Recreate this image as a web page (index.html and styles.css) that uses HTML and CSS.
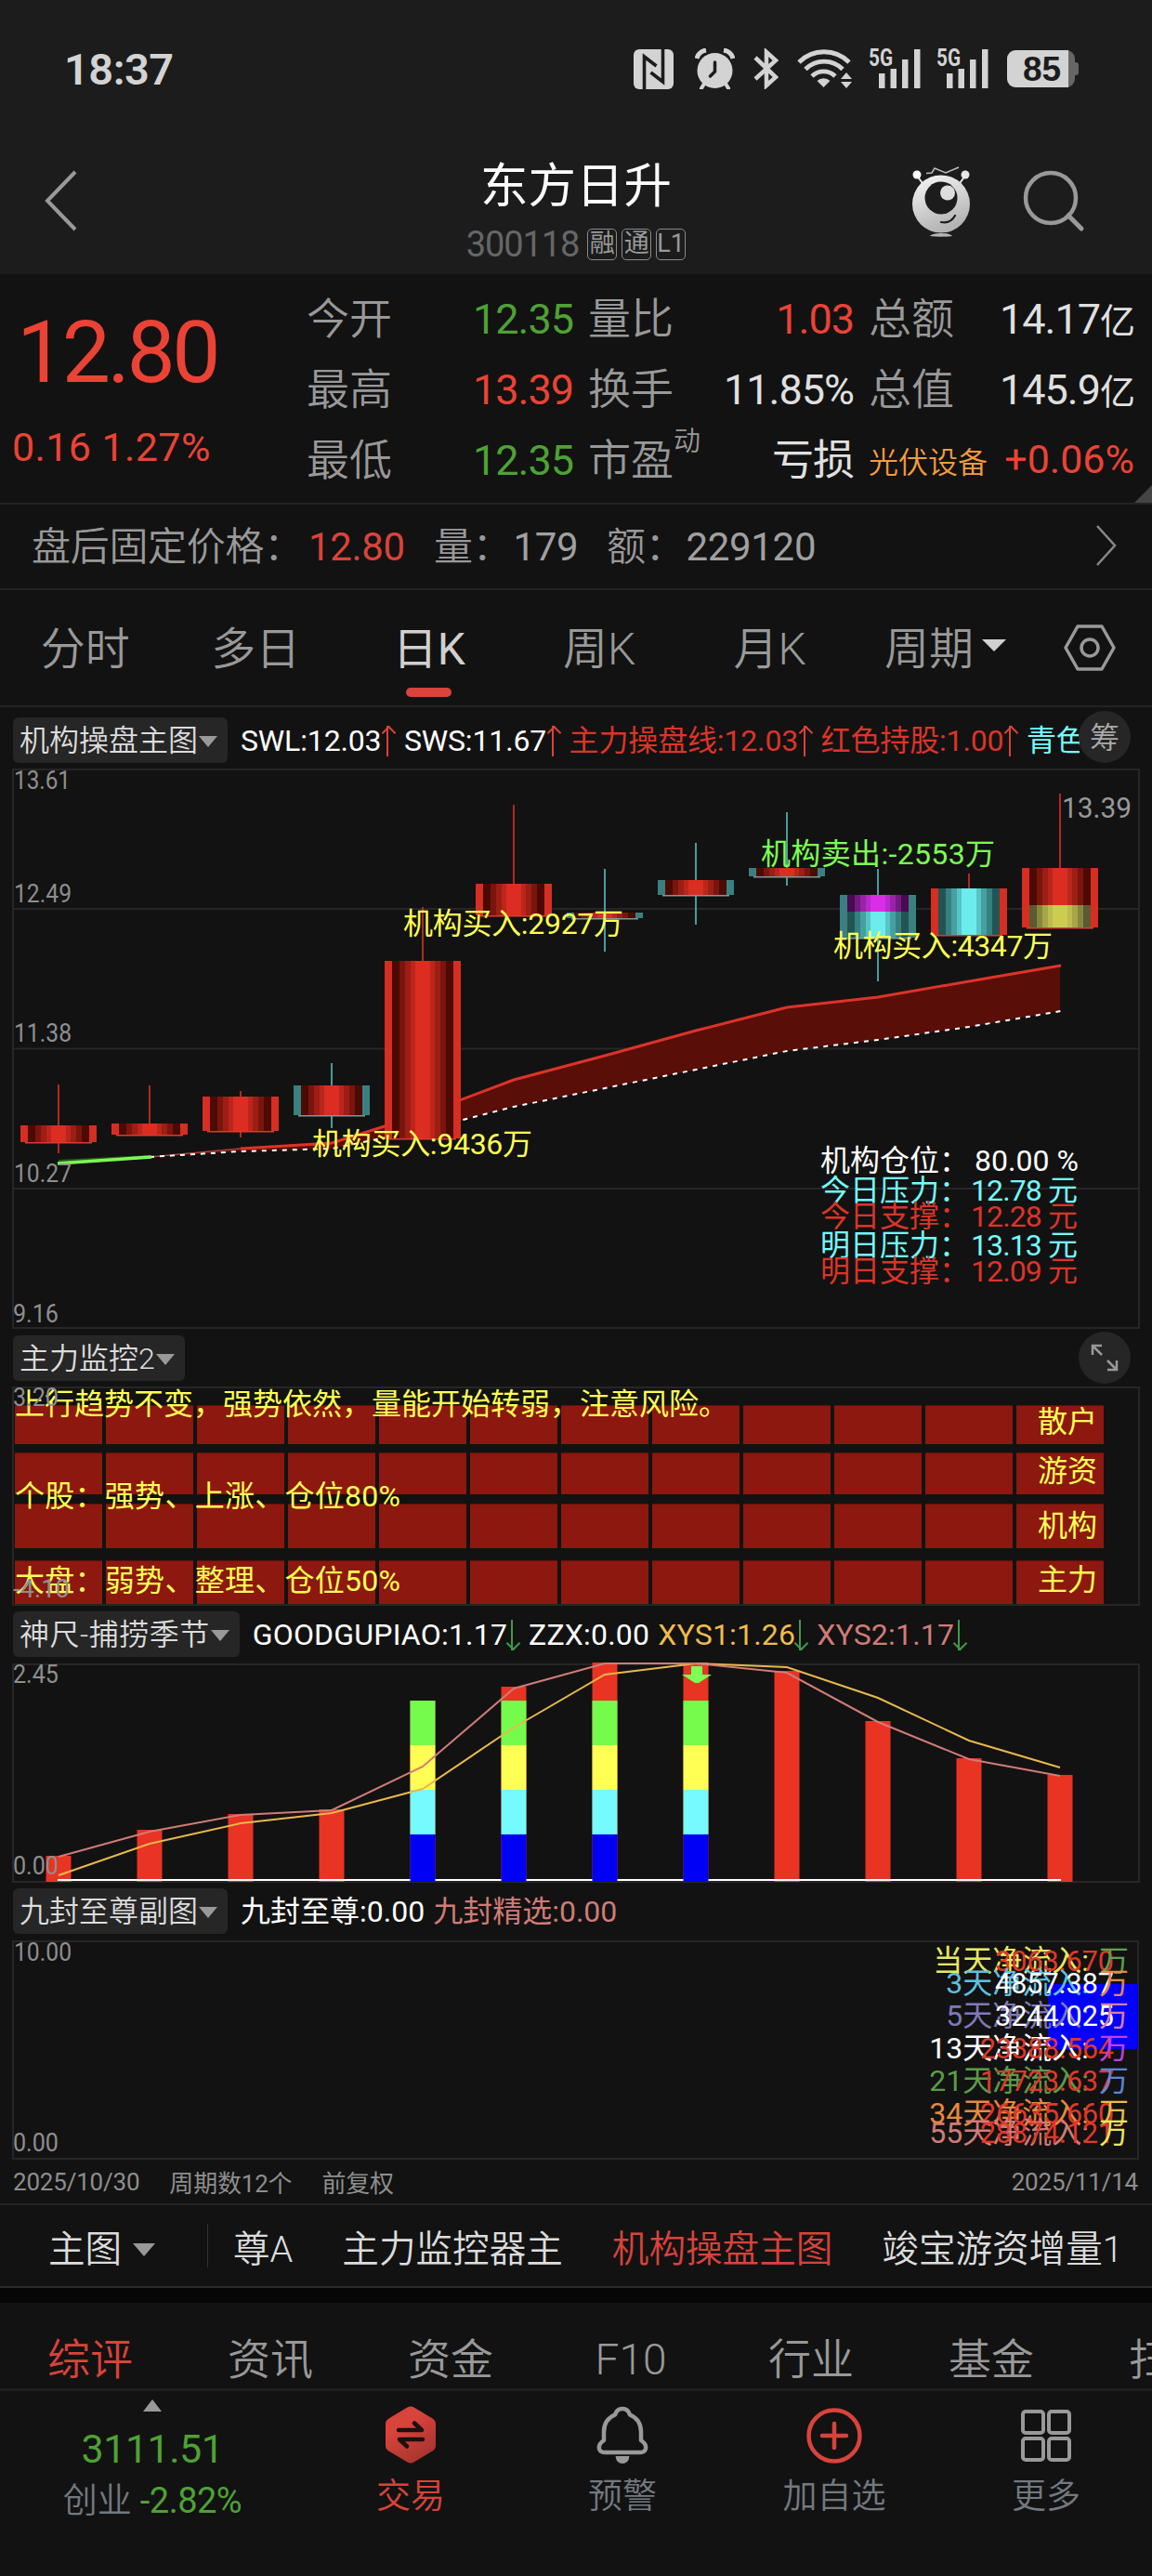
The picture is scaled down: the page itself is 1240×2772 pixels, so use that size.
FILE: index.html
```html
<!DOCTYPE html>
<html lang="zh-CN">
<head>
  <meta charset="UTF-8" />
  <meta name="viewport" content="width=device-width, initial-scale=1.0"/>
  <title>东方日升 300118</title>
  <link rel="stylesheet" href="styles.css">
</head>
<body>
  <header class="top">
    <div class="status">
      <span class="clock">18:37</span>
      <div class="status-icons">
        <svg class="i-nfc" width="43" height="43" viewBox="0 0 43 43">
          <rect width="43" height="43" rx="6" fill="#d3d3d3"/>
          <path d="M11.500 43V8l13 10M31.500 0V35l-13-10" fill="none" stroke="#1c1c1c" stroke-width="3.600"/>
        </svg>
        <svg class="i-alarm" width="43" height="44" viewBox="0 0 43 44">
          <circle cx="21.500" cy="24" r="19" fill="#d3d3d3"/>
          <path d="M2 11A12 12 0 0 1 12 2M41 11A12 12 0 0 0 31 2" stroke="#d3d3d3" stroke-width="5" fill="none"/>
          <path d="M10 38l-3 5M33 38l3 5" stroke="#d3d3d3" stroke-width="4" stroke-linecap="round"/>
          <path d="M21.500 15v10l-5 5" stroke="#1c1c1c" stroke-width="3.500" fill="none" stroke-linecap="round"/>
        </svg>
        <svg class="i-bt" width="27" height="44" viewBox="0 0 27 44">
          <path d="M2 10L24 31 14 40V4L24 13 2 33" fill="none" stroke="#d3d3d3" stroke-width="4.500"/>
        </svg>
        <svg class="i-wifi" width="59" height="43" viewBox="0 0 59 43">
          <g fill="none" stroke="#d3d3d3" stroke-width="4.800">
            <path d="M2 14A38 38 0 0 1 56 14"/>
            <path d="M9 21.500A28 28 0 0 1 49 21.500"/>
            <path d="M16 29A18 18 0 0 1 41 29"/>
          </g>
          <path d="M28.500 41l-7-7a10 10 0 0 1 14 0z" fill="#d3d3d3"/>
          <path d="M47 32l6-7 6 7zM47 35l6 7 6-7z" fill="#d3d3d3"/>
        </svg>
        <svg class="i-sig" width="56" height="44" viewBox="0 0 56 44">
          <text x="0" y="19" class="sig-text" textLength="26" lengthAdjust="spacingAndGlyphs">5G</text>
          <path d="M11 27h6.500v16H11zM23.500 22H30v21h-6.500zM36 12h6.500v31H36zM49 1h6.500v42H49z" fill="#d3d3d3"/>
        </svg>
        <svg class="i-sig" width="56" height="44" viewBox="0 0 56 44">
          <text x="0" y="19" class="sig-text" textLength="26" lengthAdjust="spacingAndGlyphs">5G</text>
          <path d="M11 27h6.500v16H11zM23.500 22H30v21h-6.500zM36 12h6.500v31H36zM49 1h6.500v42H49z" fill="#d3d3d3"/>
        </svg>
        <svg class="i-bat" width="77" height="40" viewBox="0 0 77 40">
          <path d="M60 0h4a9 9 0 0 1 9 9v4h1q3 0 3 3v8q0 3-3 3h-1v4a9 9 0 0 1-9 9h-4z" fill="#666"/>
          <path d="M9 0h57v40H9a9 9 0 0 1-9-9V9a9 9 0 0 1 9-9z" fill="#d3d3d3"/>
          <text x="37.500" y="32.500" text-anchor="middle" class="bat-text">85</text>
        </svg>
      </div>
    </div>
    <div class="navbar">
      <div class="nav-left">
        <svg width="40" height="66" viewBox="0 0 40 66"><path d="M35 2L5 33l30 31" fill="none" stroke="#999" stroke-width="4"/></svg>
      </div>
      <div class="nav-title">
        <h1>东方日升</h1>
        <div class="code"><span class="num">300118</span><i>融</i><i>通</i><i>L1</i></div>
      </div>
      <div class="nav-right">
        <svg width="64" height="80" viewBox="0 0 64 80">
          <defs>
            <linearGradient id="robot" x1="0" y1="0" x2="0.400" y2="1">
              <stop offset="0" stop-color="#f8f8f8"/><stop offset="1" stop-color="#b4b4b4"/>
            </linearGradient>
          </defs>
          <path d="M5 10l8 11M57 10l-8 11" stroke="#e8e8e8" stroke-width="2"/>
          <circle cx="5" cy="9" r="4.500" fill="#fff"/><circle cx="57" cy="9" r="4.500" fill="#e8e8e8"/>
          <path d="M15 7.500l6-.5 3-5 12 5 14-6" fill="none" stroke="#bbb" stroke-width="1.500"/>
          <circle cx="31" cy="40.500" r="31" fill="url(#robot)"/>
          <circle cx="31" cy="34" r="17.500" fill="#1c1c1c"/>
          <circle cx="38" cy="28.500" r="8" fill="#ddd"/>
          <path d="M31 60q10 2 15-7" fill="none" stroke="#1c1c1c" stroke-width="2.200" stroke-linecap="round"/>
          <path d="M19 75a12 3 0 0 1 24 0a24 5 0 0 1-24 0z" fill="#b4b4b4"/>
        </svg>
        <svg width="68" height="68" viewBox="0 0 68 68">
          <circle cx="31" cy="31" r="27" fill="none" stroke="#999" stroke-width="4.500"/>
          <path d="M50 50l14 14" stroke="#999" stroke-width="5" stroke-linecap="round"/>
        </svg>
      </div>
    </div>
  </header>

  <section class="quote">
    <div class="price">
      <div class="last num">12.80</div>
      <div class="change num">0.16 1.27%</div>
    </div>
    <div class="grid">
      <div><label>今开</label><b class="down">12.35</b></div>
      <div><label>量比</label><b class="up">1.03</b></div>
      <div><label>总额</label><b>14.17<small>亿</small></b></div>
      <div><label>最高</label><b class="up">13.39</b></div>
      <div><label>换手</label><b>11.85%</b></div>
      <div><label>总值</label><b>145.9<small>亿</small></b></div>
      <div><label>最低</label><b class="down">12.35</b></div>
      <div><label>市盈<sup>动</sup></label><b>亏损</b></div>
      <div class="sector"><label>光伏设备</label><b class="up">+0.06%</b></div>
    </div>
    <span class="corner"></span>
  </section>

  <section class="after">
    <span class="a-price">盘后固定价格：<b class="up">12.80</b></span>
    <span class="a-vol">量：<b>179</b></span>
    <span class="a-amt">额：<b>229120</b></span>
    <svg width="24" height="46" viewBox="0 0 24 46"><path d="M2 2l19 21L2 44" fill="none" stroke="#888" stroke-width="2.500"/></svg>
  </section>

  <nav class="periods">
    <span>分时</span>
    <span>多日</span>
    <span class="k active">日K</span>
    <span class="k">周K</span>
    <span class="k">月K</span>
    <span class="more">周期<i class="tri"></i></span>
    <svg width="56" height="50" viewBox="0 0 56 50">
      <path d="M15 2h26l13 23-13 23H15L2 25z" fill="none" stroke="#999" stroke-width="3.500" stroke-linejoin="round"/>
      <circle cx="28" cy="25" r="9" fill="none" stroke="#999" stroke-width="3.500"/>
    </svg>
  </nav>

  <div class="legend first">
    <span class="tag">机构操盘主图<i class="tri"></i></span>
    <div class="values">
      <span class="w">SWL:12.03</span><i class="arr up-arr"></i>
      <span class="w">SWS:11.67</span><i class="arr up-arr"></i>
      <span class="r">主力操盘线:12.03</span><i class="arr up-arr"></i>
      <span class="r">红色持股:1.00</span><i class="arr up-arr"></i>
      <span class="c">青色</span>
    </div>
    <span class="round">筹</span>
  </div>
  <svg class="chart" id="main" width="1240" height="603" viewBox="0 827 1240 603">
    <path class="grid-line" d="M14 978H1226M14 1128.500H1226M14 1279H1226"/>
    <rect class="frame" x="14" y="828" width="1212" height="601"/>
    <polygon points="63,1248 161,1243 161,1246 63,1252" fill="#2f5a1e"/>
    <polygon fill="#5a0e08" points="161,1245 259,1236 357,1230 455,1199 553,1162 651,1136 749,1109 847,1084 945,1073 1043,1056 1141,1039 1141,1088 1043,1105 945,1119 847,1131 749,1151 651,1171 553,1191 455,1216 357,1236 259,1239"/>
    <polyline points="161,1245 259,1236" stroke="#a8443c" stroke-width="1.500"/>
    <polyline points="259,1236 357,1230 455,1199 553,1162 651,1136 749,1109 847,1084 945,1073 1043,1056 1142,1039" fill="none" stroke="#dc3428" stroke-width="3"/>
    <polyline points="161,1245 259,1239 357,1236 455,1216 553,1191 651,1171 749,1151 847,1131 945,1119 1043,1105 1142,1088" fill="none" stroke="#fff" stroke-width="2" stroke-dasharray="5 6"/>
    <polyline points="62,1252 163,1245" stroke="#7dff55" stroke-width="3.500"/>
    <g id="candles"></g>
    <g class="axis">
      <text x="15" y="849" textLength="61" lengthAdjust="spacingAndGlyphs">13.61</text>
      <text x="15" y="971" textLength="62" lengthAdjust="spacingAndGlyphs">12.49</text>
      <text x="15" y="1121" textLength="62" lengthAdjust="spacingAndGlyphs">11.38</text>
      <text x="15" y="1272" textLength="62" lengthAdjust="spacingAndGlyphs">10.27</text>
      <text x="14" y="1423" textLength="49" lengthAdjust="spacingAndGlyphs">9.16</text>
      <text class="high" x="1143" y="880" textLength="75" lengthAdjust="spacingAndGlyphs">13.39</text>
    </g>
    <g class="note">
      <text x="434" y="1005" textLength="237">机构买入:2927万</text>
      <text x="336" y="1242" textLength="237">机构买入:9436万</text>
      <text x="897" y="1029" textLength="236">机构买入:4347万</text>
      <text x="819" y="930" textLength="252" fill="#7dff55">机构卖出:-2553万</text>
    </g>
    <g class="info">
      <g fill="#fff"><text x="883" y="1260">机构仓位：</text><text x="1049" y="1260" textLength="112">80.00 %</text></g>
      <g fill="#75fbfd"><text x="883" y="1292">今日压力：</text><text x="1045" y="1292" textLength="115">12.78 元</text></g>
      <g fill="#dc3428"><text x="883" y="1320">今日支撑：</text><text x="1045" y="1320" textLength="115">12.28 元</text></g>
      <g fill="#75fbfd"><text x="883" y="1351">明日压力：</text><text x="1045" y="1351" textLength="115">13.13 元</text></g>
      <g fill="#dc3428"><text x="883" y="1379">明日支撑：</text><text x="1045" y="1379" textLength="115">12.09 元</text></g>
    </g>
  </svg>

  <div class="legend second">
    <span class="tag">主力监控2<i class="tri"></i></span>
    <span class="round">
      <svg width="30" height="30" viewBox="0 0 30 30"><path d="M2 12V2h10M2 2l10 10M28 18v10H18M28 28L18 18" fill="none" stroke="#999" stroke-width="2.500"/></svg>
    </span>
  </div>
  <svg class="chart" width="1240" height="236" viewBox="0 1492 1240 236">
    <g id="cells"></g>
    <rect class="frame" x="14" y="1493" width="1212" height="234"/>
    <g class="note">
      <text x="16" y="1522">上行趋势不变，强势依然，量能开始转弱，注意风险。</text>
      <text x="16" y="1621" textLength="415">个股：强势、上涨、仓位80%</text>
      <text x="16" y="1712" textLength="415">大盘：弱势、整理、仓位50%</text>
      <text x="1117" y="1541">散户</text>
      <text x="1117" y="1594">游资</text>
      <text x="1117" y="1653">机构</text>
      <text x="1117" y="1711">主力</text>
    </g>
    <g class="axis">
      <text x="14" y="1513" textLength="49" lengthAdjust="spacingAndGlyphs">3.20</text>
      <text x="14" y="1719" textLength="61" lengthAdjust="spacingAndGlyphs">-4.10</text>
    </g>
  </svg>

  <div class="legend third">
    <span class="tag">神尺-捕捞季节<i class="tri"></i></span>
    <div class="values">
      <span class="w good">GOODGUPIAO:1.17</span><i class="arr down-arr"></i>
      <span class="w">ZZX:0.00</span>
      <span class="y">XYS1:1.26</span><i class="arr down-arr"></i>
      <span class="p">XYS2:1.17</span><i class="arr down-arr"></i>
    </div>
  </div>
  <svg class="chart" width="1240" height="236" viewBox="0 1790 1240 236">
    <rect class="frame" x="14" y="1791" width="1212" height="234"/>
    <g id="bars"></g>
    <polyline points="63,2018 161,1984 259,1962 357,1951 455,1925 553,1859 651,1802 749,1790 847,1794 945,1827 1043,1873 1141,1902" fill="none" stroke="#e8b84c" stroke-width="2"/>
    <polyline points="63,1998 161,1971 259,1953 357,1948 455,1901 553,1817 651,1790 749,1790 847,1800 945,1853 1043,1893 1141,1911" fill="none" stroke="#d07c76" stroke-width="2"/>
    <path d="M744 1793h12v9h10l-14 9h-4l-14-9h10z" fill="#7dff55"/>
    <g class="axis">
      <text x="14" y="1811" textLength="49" lengthAdjust="spacingAndGlyphs">2.45</text>
      <text x="14" y="2017" textLength="49" lengthAdjust="spacingAndGlyphs">0.00</text>
    </g>
  </svg>

  <div class="legend third fourth">
    <span class="tag">九封至尊副图<i class="tri"></i></span>
    <div class="values">
      <span class="w">九封至尊:0.00</span>
      <span class="p">九封精选:0.00</span>
    </div>
  </div>
  <svg class="chart" width="1240" height="236" viewBox="0 2088 1240 236">
    <rect class="frame" x="14" y="2089" width="1211" height="234"/>
    <rect x="1128" y="2135" width="97" height="70" fill="#00f"/>
    <g id="flows" class="flow"></g>
    <g class="axis">
      <text x="15" y="2110" textLength="62" lengthAdjust="spacingAndGlyphs">10.00</text>
      <text x="14" y="2315" textLength="49" lengthAdjust="spacingAndGlyphs">0.00</text>
    </g>
  </svg>

  <div class="dates">
    <span>2025/10/30</span>
    <span>周期数12个</span>
    <span>前复权</span>
    <span class="end">2025/11/14</span>
  </div>

  <div class="picker">
    <span class="pick-main">主图<i class="tri"></i></span>
    <span>尊A</span>
    <span>主力监控器主</span>
    <span class="active">机构操盘主图</span>
    <span>竣宝游资增量1</span>
  </div>

  <nav class="tabs">
    <span class="active">综评</span>
    <span>资讯</span>
    <span>资金</span>
    <span>F10</span>
    <span>行业</span>
    <span>基金</span>
    <span>扫雷</span>
  </nav>

  <footer class="bottom">
    <div class="index">
      <i class="tri-up"></i>
      <div class="idx-value num">3111.51</div>
      <div class="idx-change">创业 <b>-2.82%</b></div>
    </div>
    <div class="item red">
      <svg width="56" height="62" viewBox="0 0 56 62">
        <defs>
          <linearGradient id="trade" x1="0" y1="0" x2="0.600" y2="1">
            <stop offset="0.400" stop-color="#d8433b"/><stop offset="1" stop-color="#a8352f"/>
          </linearGradient>
        </defs>
        <path d="M24.500 1.500q3.500-2 7 0l20 12q3.500 2 3.500 6v23q0 4-3.500 6l-20 12q-3.500 2-7 0l-20-12Q1 46.500 1 42.500v-23q0-4 3.500-6z" fill="url(#trade)"/>
        <path d="M15 26h25l-8-7.500M41 36H16l8 7.500" fill="none" stroke="#1a1010" stroke-width="4.500" stroke-linecap="round" stroke-linejoin="round"/>
      </svg>
      <span>交易</span>
    </div>
    <div class="item">
      <svg width="56" height="62" viewBox="0 0 56 62">
        <path d="M28 3q6 0 8 6.500q12 5 12 18.500v9q6 4 5 9q-1 4-6 4H9q-5 0-6-4q-1-5 5-9v-9Q8 14.500 20 9.500Q22 3 28 3z" fill="none" stroke="#999" stroke-width="4.500" stroke-linejoin="round"/>
        <path d="M20.500 54h15q-1 8-7.500 8t-7.500-8z" fill="#999"/>
      </svg>
      <span>预警</span>
    </div>
    <div class="item">
      <svg width="60" height="62" viewBox="0 0 60 62">
        <circle cx="30" cy="32" r="27.500" fill="none" stroke="#d8433b" stroke-width="4.500"/>
        <path d="M30 19v26M17 32h26" stroke="#d8433b" stroke-width="4.500" stroke-linecap="round"/>
      </svg>
      <span>加自选</span>
    </div>
    <div class="item">
      <svg width="56" height="62" viewBox="0 0 56 62">
        <g fill="none" stroke="#999" stroke-width="4">
          <rect x="3" y="6" width="22" height="23" rx="3"/><rect x="31" y="6" width="22" height="23" rx="3"/>
          <rect x="3" y="35" width="22" height="23" rx="3"/><rect x="31" y="35" width="22" height="23" rx="3"/>
        </g>
      </svg>
      <span>更多</span>
    </div>
  </footer>

  <script src="script.js"></script>
</body>
</html>
```

FILE: styles.css
```css
* {
  box-sizing: border-box;
}

body {
  margin: 0;
  width: 1240px;
  height: 2772px;
  overflow: hidden;
  background: #121212;
  color: #999;
  font-family: Roboto, "Noto Sans CJK SC", sans-serif;
  font-weight: 350;
}

svg {
  display: block;
  flex-shrink: 0;
}

b, i {
  font-weight: 400;
  font-style: normal;
}

h1 {
  margin: 0;
  font-size: 51.5px;
  line-height: 60px;
  font-weight: 400;
  color: #fff;
}

.num {
  font-weight: 400;
  letter-spacing: -0.03em;
}

.up { color: #ea4335; }
.down { color: #4ea135; }

/* status bar + title */
.top {
  height: 295px;
  background: #1c1c1c;
}

.status {
  height: 148px;
  padding: 0 79px 0 69px;
  display: flex;
  justify-content: space-between;
  align-items: center;
}

.clock {
  font-size: 47px;
  font-weight: 600;
  letter-spacing: -0.5px;
  color: #d3d3d3;
}

.status-icons {
  display: flex;
  align-items: center;
}

.i-alarm { margin-left: 23px; }
.i-bt, .i-wifi, .i-bat { margin-left: 20px; }
.i-sig { margin-left: 17.5px; }

.sig-text {
  font-size: 25px;
  font-weight: 700;
  fill: #d3d3d3;
}

.bat-text {
  font-family: "Liberation Sans", sans-serif;
  font-size: 37px;
  font-weight: 700;
  fill: #1c1c1c;
}

.navbar {
  height: 147px;
  display: flex;
}

.nav-left {
  width: 300px;
  padding: 35px 0 0 46px;
}

.nav-title {
  flex: 1;
  padding-top: 23px;
  text-align: center;
}

.code {
  display: flex;
  justify-content: center;
  align-items: center;
  gap: 5px;
  margin-top: 12px;
  height: 40px;
  font-size: 38px;
  color: #666;
}

.code .num {
  margin-right: 4px;
}

.code i {
  width: 32px;
  height: 34px;
  border: 1.5px solid #8a8a8a;
  border-radius: 5px;
  font-size: 27px;
  line-height: 31px;
  color: #999;
}

.nav-right {
  width: 300px;
  padding: 31px 0 0 42px;
  display: flex;
  gap: 54px;
}

.nav-right svg + svg {
  margin-top: 3px;
}

/* quote header */
.quote {
  position: relative;
  height: 248px;
  display: flex;
  border-bottom: 2px solid #232323;
}

.price {
  width: 330px;
  color: #ea4335;
}

.last {
  padding: 30px 0 0 18px;
  font-size: 93px;
  line-height: 110px;
  letter-spacing: -3.5px;
}

.change {
  padding: 21px 0 0 13px;
  font-size: 43px;
  line-height: 50px;
  letter-spacing: 0.4px;
}

.grid {
  display: grid;
  grid-template-columns: 287px 286px 286px;
  grid-auto-rows: 76px;
  column-gap: 16px;
  padding-top: 10px;
}

.grid > div {
  display: flex;
  justify-content: space-between;
  align-items: baseline;
  line-height: 76px;
  white-space: nowrap;
}

.grid label {
  font-size: 46px;
}

.grid b {
  font-size: 45px;
  letter-spacing: -1px;
  color: #e0e0e0;
}

.grid small {
  font-size: 38px;
  line-height: 0;
}

.grid b.up { color: #ea4335; }
.grid b.down { color: #4ea135; }

.grid sup {
  font-size: 29px;
  line-height: 0;
  vertical-align: 26px;
}

.grid .sector { line-height: 74px; }

.grid .sector label {
  font-size: 32px;
  color: #f29b3e;
}

.grid .sector b {
  font-size: 43px;
  letter-spacing: 0;
}

.corner {
  position: absolute;
  right: 0;
  bottom: 0;
  border-left: 19px solid transparent;
  border-bottom: 19px solid #444;
}

/* after-hours fixed price */
.after {
  height: 92px;
  padding: 0 37px 7px 34px;
  display: flex;
  align-items: center;
  border-bottom: 2px solid #232323;
  font-size: 42px;
  letter-spacing: -0.3px;
}

.after b { color: #a0a0a0; }
.after b.up { color: #d9433a; }
.a-price { width: 433px; }
.a-price b { margin-left: 6px; }
.a-vol { width: 186px; }
.after .a-vol b, .after .a-amt b { margin-left: 2px; }
.after svg { margin: 5px 0 0 auto; }

/* period tabs */
.periods {
  height: 126px;
  padding-bottom: 6px;
  display: flex;
  align-items: center;
  border-bottom: 2px solid #232323;
  font-size: 48px;
}

.periods span {
  position: relative;
  width: 183.5px;
  text-align: center;
}

.periods .k { padding-left: 6px; }

.periods .active {
  color: #d0d0d0;
  font-weight: 400;
}

.periods .active::after {
  content: "";
  position: absolute;
  left: 70px;
  bottom: -21px;
  width: 49px;
  height: 10px;
  border-radius: 5px;
  background: #d9433a;
}

.periods .more {
  width: 200px;
  display: flex;
  justify-content: center;
  align-items: center;
}

.periods svg { margin: 5px 0 0 27px; }

.tri {
  display: inline-block;
  border: 10.5px solid transparent;
  border-top: 12px solid #999;
  border-bottom: 0;
}

.periods .tri {
  margin-left: 9px;
  border-width: 13px 13px 0;
  border-top-color: #d0d0d0;
}

/* indicator headers */
.legend {
  height: 62px;
  padding: 0 23px 0 14px;
  display: flex;
  align-items: flex-start;
  position: relative;
  font-size: 32px;
  line-height: 51px;
  white-space: nowrap;
}

.legend.first { height: 66px; padding-top: 11px; }
.legend.second { padding-top: 7px; }
.legend.third { padding-top: 6px; }

.tag {
  height: 49px;
  padding: 2px 11px 0 7px;
  display: flex;
  align-items: center;
  border-radius: 6px;
  background: #262626;
  color: #dcdcdc;
}

.tag .tri { margin-left: 1px; }
.third .tag { letter-spacing: 0.5px; }
.fourth .tag { letter-spacing: 0; }

.values {
  display: flex;
  align-items: center;
  margin-left: 14px;
}

.first .values {
  width: 903px;
  overflow: hidden;
  letter-spacing: -0.15px;
}

.third .values { letter-spacing: 0.2px; }
.fourth .values { letter-spacing: 0; }

.values span { font-weight: 400; }
.w { color: #fff; }
.r { color: #dc3428; }
.c { color: #75fbfd; }
.y { color: #f0bc4c; }
.p { color: #d07c76; }

.arr {
  flex-shrink: 0;
  position: relative;
  width: 2px;
  height: 33px;
  margin: 0 17px 0 6px;
  background: #d9433a;
}

.first .arr { margin-right: 16.5px; }
.third .arr { margin: 0 17px 0 4px; }

.arr::before {
  content: "";
  position: absolute;
  left: -3.5px;
  top: 2px;
  width: 9px;
  height: 9px;
  border: solid #d9433a;
  border-width: 2px 0 0 2px;
  transform: rotate(45deg);
}

.down-arr { background: #3f9a48; }

.down-arr::before {
  top: auto;
  bottom: 2px;
  border-color: #3f9a48;
  border-width: 0 2px 2px 0;
}

.values span + span { margin-left: 9px; }

.round {
  position: absolute;
  right: 23px;
  top: 4px;
  width: 56px;
  height: 56px;
  display: flex;
  justify-content: center;
  align-items: center;
  border-radius: 50%;
  background: #262626;
  color: #aaa;
}

.first .round { padding-top: 3px; }
.second .round { top: 3px; }

/* charts */
.chart { overflow: visible; }

.frame, .grid-line {
  fill: none;
  stroke: #262626;
  stroke-width: 2;
}

.axis text {
  font-size: 28px;
  font-weight: 400;
  fill: #8e8e8e;
}

.axis .high {
  font-size: 32px;
  fill: #999;
}

.note, .info, .flow {
  font-size: 32px;
  font-weight: 400;
}

.note { fill: #ffff54; }

.dates {
  height: 49px;
  padding: 0 15px 0 14px;
  display: flex;
  align-items: center;
  gap: 32px;
  border-bottom: 2px solid #232323;
  font-size: 26px;
  font-weight: 400;
  letter-spacing: -0.2px;
  color: #8e8e8e;
}

.dates .end { margin-left: auto; }

/* main chart picker */
.picker {
  height: 89px;
  display: flex;
  align-items: center;
  border-bottom: 2px solid #2a2a2a;
  font-size: 39.6px;
  color: #dcdcdc;
  white-space: nowrap;
  overflow: hidden;
}

.picker span {
  flex-shrink: 0;
  margin-right: 53px;
}

.picker .pick-main {
  width: 224px;
  height: 47px;
  margin-right: 27px;
  padding-left: 52px;
  display: flex;
  align-items: center;
  border-right: 1px solid #333;
}

.pick-main .tri {
  margin: 8px 0 0 12px;
  border-width: 14px 12px 0;
}

.active, .picker .active { color: #d9433a; }

.tabs {
  height: 111px;
  padding-top: 16px;
  display: flex;
  align-items: center;
  background: linear-gradient(#060606 16px, #121212 16px);
  border-bottom: 3px solid #1e1e1e;
  font-size: 46px;
  line-height: 60px;
  white-space: nowrap;
  overflow: hidden;
}

.tabs span {
  flex-shrink: 0;
  width: 194px;
  padding-top: 29px;
  text-align: center;
}

/* bottom bar */
.bottom {
  display: flex;
  font-size: 37px;
  color: #727980;
  text-align: center;
}

.index { width: 328px; padding-top: 9px; }

.tri-up {
  display: block;
  width: 0;
  margin-left: 154px;
  border: 10.5px solid transparent;
  border-top: 0;
  border-bottom: 13px solid #999;
}

.idx-value {
  margin-top: 15px;
  font-size: 43px;
  line-height: 50px;
  letter-spacing: -0.5px;
  color: #4ea135;
}

.idx-change {
  margin-top: 9px;
  line-height: 44px;
}

.idx-change b {
  font-size: 38px;
  letter-spacing: -0.5px;
  color: #4ea135;
}

.item {
  width: 228px;
  padding-top: 16px;
  display: flex;
  flex-direction: column;
  align-items: center;
}

.item span {
  margin-top: 14px;
  line-height: 44px;
}

.item.red { color: #d8433b; }
```

FILE: script.js
```js
const STEP = 98;
const FIRST = 63;

const shades = {
  red: ['#4c0a04', '#7a150d', '#9c1e14', '#bb261b', '#dc2d22'],
  magenta: ['#4a0a50', '#741a80', '#9a22a8', '#bc28cc', '#dc2de6'],
  cyan: ['#235454', '#358080', '#46a0a0', '#58c4c6', '#6cecec'],
  yellow: ['#5a5a34', '#86863e', '#a6a648', '#bcbc50', '#cccc50']
};
const widths = [66, 50, 38, 26, 16];

// top, bottom, high, low, edge, layers [shade, from]
const candles = [
  [1211, 1229, 1167, 1241, 'up', [['red', 1211]]],
  [1209, 1221, 1168, 1222, 'up', [['red', 1209]]],
  [1180, 1217, 1174, 1224, 'up', [['red', 1180]]],
  [1168, 1200, 1144, 1214, 'down', [['red', 1168]]],
  [1034, 1225, 976, 1225, 'up', [['red', 1034]]],
  [951, 985, 866, 985, 'up', [['red', 951]]],
  [982, 988, 935, 1024, 'down', [['red', 982]]],
  [947, 963, 907, 995, 'down', [['red', 947]]],
  [934, 943, 874, 953, 'down', [['red', 934]]],
  [963, 1009, 935, 1056, 'down', [['magenta', 963], ['cyan', 981]]],
  [956, 1006, 940, 1006, 'up', [['cyan', 956]]],
  [934, 998, 854, 998, 'up', [['red', 934], ['yellow', 974]]]
];

function rect(x, y, w, h, fill) {
  return `<rect x="${x}" y="${y}" width="${w}" height="${h}" fill="${fill}"/>`;
}

function drawCandles() {
  let out = '';
  candles.forEach(([top, bottom, high, low, dir, layers], i) => {
    const cx = FIRST + i * STEP;
    const wick = dir === 'up' ? '#b02a20' : '#4a9c9c';
    const edge = dir === 'up' ? '#d62e22' : '#3a8080';
    out += rect(cx - 1, high, 2, low - high, wick);
    out += rect(cx - 41, top, 82, bottom - top, edge);
    layers.forEach(([shade, from], n) => {
      const to = n + 1 < layers.length ? layers[n + 1][1] : bottom;
      widths.forEach((w, k) => {
        out += rect(cx - w / 2, from, w, to - from, shades[shade][k]);
      });
    });
    out += rect(cx - 36, bottom, 72, 1.5, dir === 'up' ? '#dc3a2e' : '#7a9a9a');
  });
  document.getElementById('candles').innerHTML = out;
}

function drawCells() {
  const rows = [[1512, 42], [1563, 45], [1618, 48], [1679, 48]];
  let out = '';
  rows.forEach(([y, h]) => {
    for (let i = 0; i < 12; i++) {
      out += rect(16 + i * STEP, y, 94, h, '#8c1810');
      out += rect(16 + i * STEP, y, 94, 1, '#5e120c');
    }
  });
  document.getElementById('cells').innerHTML = out;
}

function drawBars() {
  const tops = [1997, 1969, 1952, 1947, 1830, 1815, 1789, 1789, 1798, 1852, 1892, 1910];
  let bars = '';
  let stacks = '';
  tops.forEach((top, i) => {
    const x = 49.5 + i * STEP;
    bars += rect(x, top, 27, 2025 - top, '#e93323');
    if (i >= 4 && i <= 7) {
      stacks += rect(x, 1830, 27, 48, '#75fb4c');
      stacks += rect(x, 1878, 27, 48, '#ffff54');
      stacks += rect(x, 1926, 27, 48, '#75fbfd');
      stacks += rect(x, 1974, 27, 51, '#0000f5');
    }
  });
  document.getElementById('bars').innerHTML = bars + rect(62, 2022, 1080, 2, '#fff') + stacks;
}

function drawFlows() {
  const flows = [
    ['当天', '3063.670', 2121, '#e8e860', '#e0382a', '#5fa04e'],
    ['3天', '4857.387', 2145, '#5fc0e0', '#fff', '#e58a4a'],
    ['5天', '3244.025', 2180, '#8078b8', '#fff', '#d87fa0'],
    ['13天', '23388.564', 2215, '#fff', '#e0382a', '#c040e0'],
    ['21天', '17723.637', 2250, '#5a9c48', '#e0382a', '#5b86d8'],
    ['34天', '26635.660', 2285, '#e58a3c', '#e0382a', '#e8bb50'],
    ['55天', '28874.121', 2306, '#d07c76', '#e0382a', '#e8e860']
  ];
  let out = '';
  flows.forEach(([day, value, y, c1, c2, c3]) => {
    const w = value.length === 8 ? 128 : 144;
    out += `<text x="1172" y="${y}" text-anchor="end" fill="${c1}">${day}净流入:</text>`;
    out += `<text x="${1199 - w}" y="${y}" textLength="${w}" lengthAdjust="spacingAndGlyphs" fill="${c2}">${value}</text>`;
    out += `<text x="1183" y="${y}" fill="${c3}">万</text>`;
  });
  document.getElementById('flows').innerHTML = out;
}

drawCandles();
drawCells();
drawBars();
drawFlows();
```
